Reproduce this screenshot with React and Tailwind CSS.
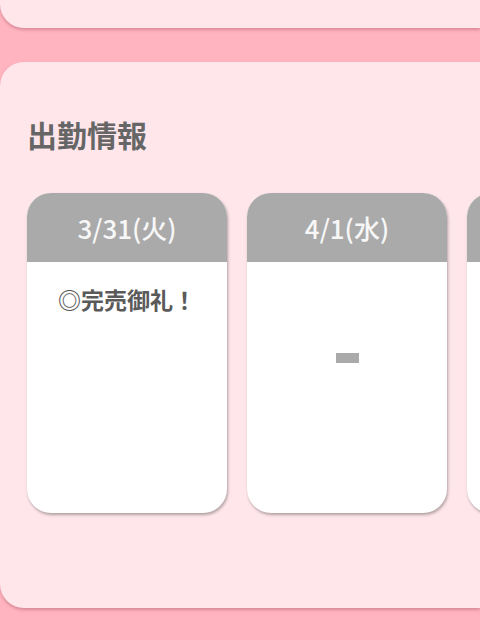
import React from 'react'

const days = [
  { date: '3/31(火)', note: '◎完売御礼！' },
  { date: '4/1(水)', note: null },
  { date: '4/2(木)', note: null },
]

function DayCard({ date, note }) {
  return (
    <div className="w-[200px] h-[320px] shrink-0 rounded-[24px] overflow-hidden bg-white shadow-[1px_2px_3px_rgba(0,0,0,0.3)] flex flex-col">
      <div className="h-[69px] bg-[#aaaaaa] flex items-center justify-center text-[#f7f7f7] text-[26px] font-medium">
        {date}
      </div>
      <div className="flex-1 flex flex-col items-center">
        {note ? (
          <p className="pt-[20px] text-[23px] leading-[34px] font-bold text-[#5a5a5a]">{note}</p>
        ) : (
          // empty day shows a dash
          <div aria-label="ー" className="mt-[91px] w-[23px] h-[10px] bg-[#aaaaaa]" />
        )}
      </div>
    </div>
  )
}

export default function App() {
  return (
    <div
      className="w-[480px] h-[640px] overflow-hidden bg-[#ffb4bf]"
      style={{ fontFamily: '"Noto Sans CJK JP", "Noto Sans", sans-serif' }}
    >
      {/* previous section (cut off) */}
      <div className="h-[28px] bg-[#fee6ea] rounded-bl-[24px] shadow-[0_2px_3px_rgba(150,60,80,0.35)]" />

      {/* 出勤情報 */}
      <div className="mt-[34px] h-[546px] bg-[#fee6ea] rounded-l-[24px] shadow-[0_2px_3px_rgba(150,60,80,0.35)] pt-[50px] pl-[27px] overflow-hidden">
        <h2 className="text-[30px] leading-[44px] font-bold text-[#666666]">出勤情報</h2>
        <div className="mt-[37px] flex gap-[20px]">
          {days.map((d) => (
            <DayCard key={d.date} {...d} />
          ))}
        </div>
      </div>
    </div>
  )
}
